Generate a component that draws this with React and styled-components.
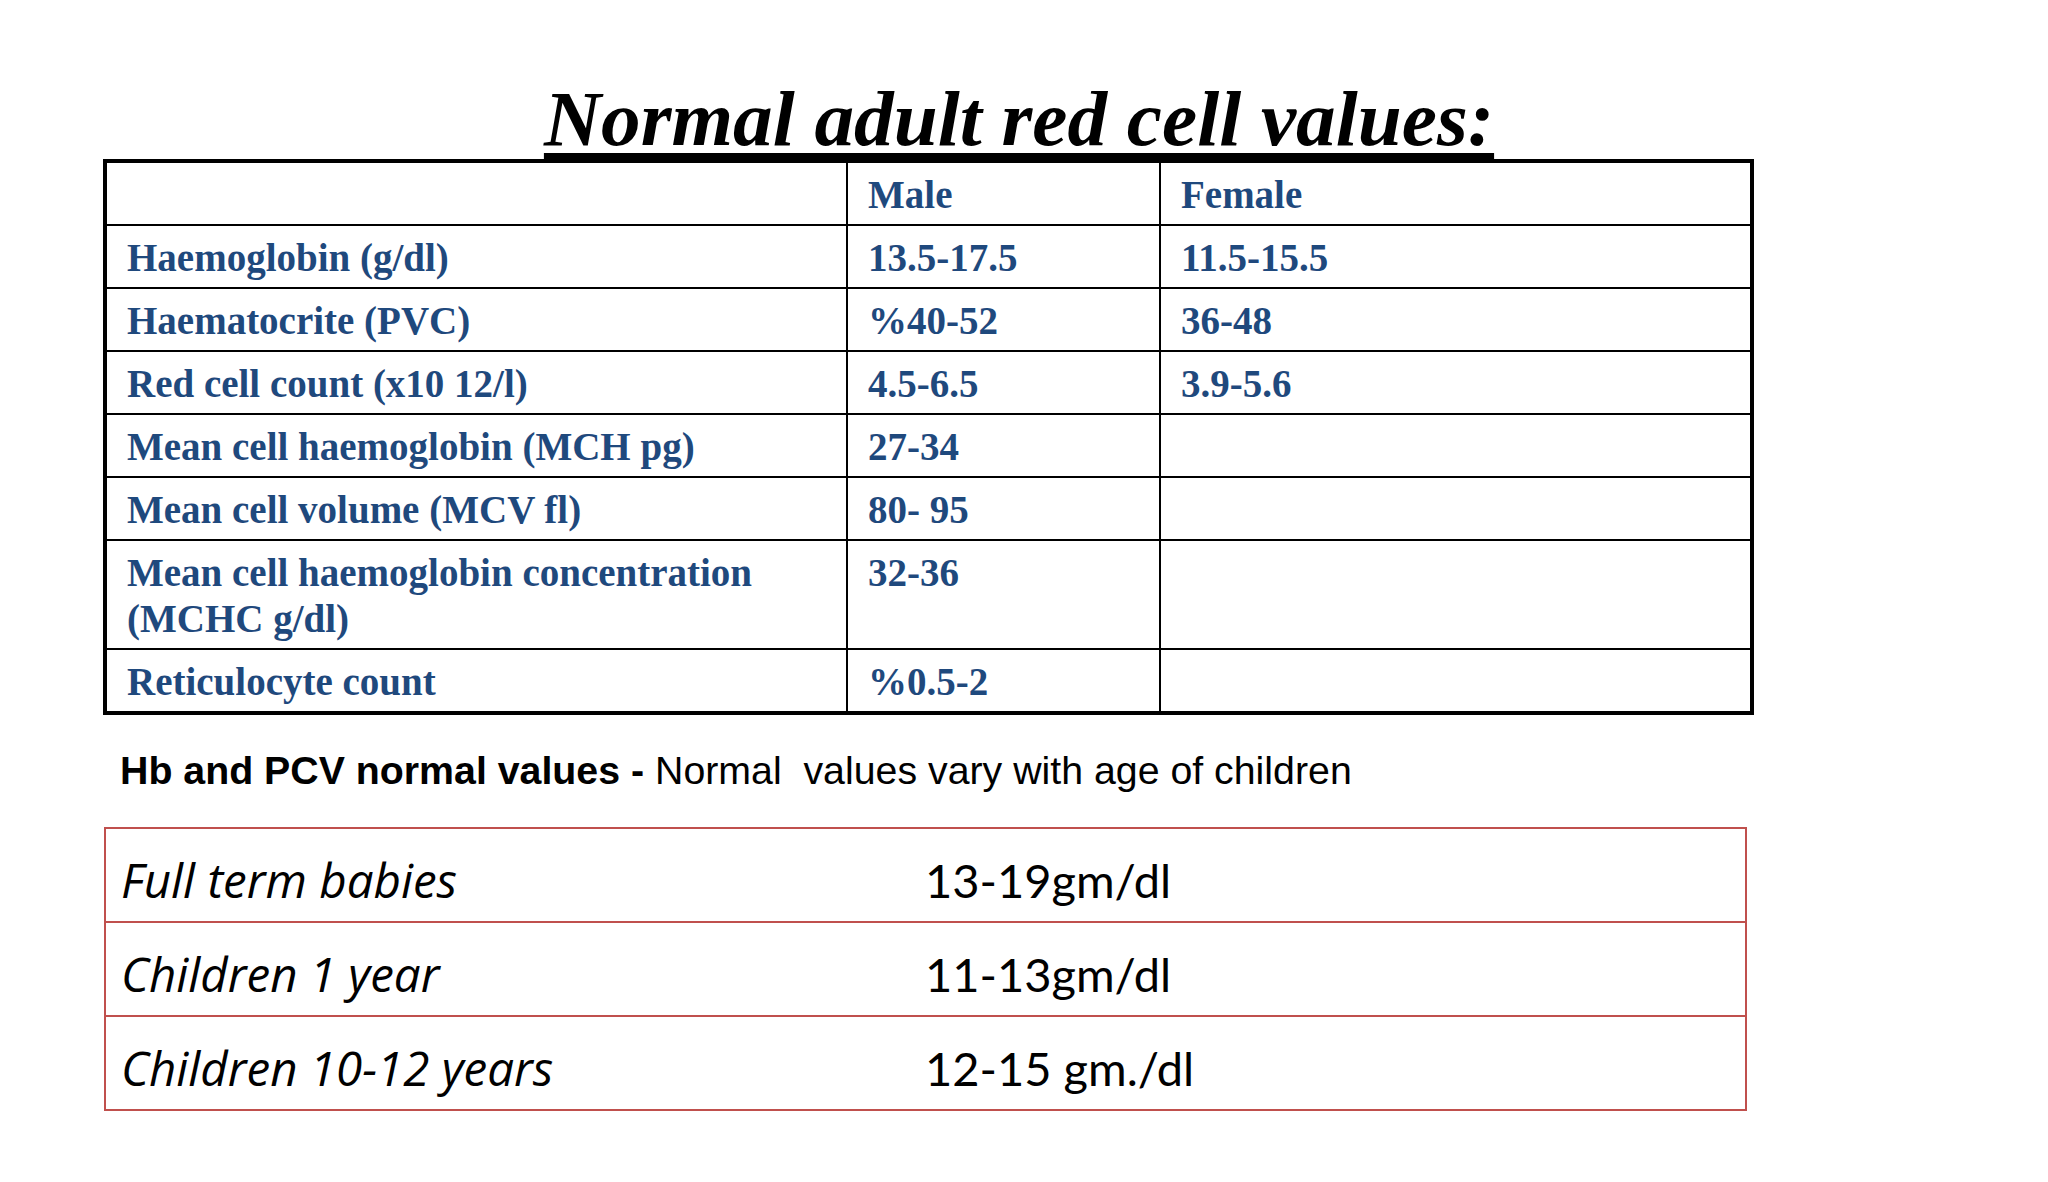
import React from "react";
import styled, { createGlobalStyle } from "styled-components";

const GlobalStyle = createGlobalStyle`
  html, body {
    margin: 0;
    padding: 0;
    background: #ffffff;
  }
`;

const Slide = styled.main`
  width: 2048px;
  height: 1182px;
  box-sizing: border-box;
  padding: 78px 0 0 103px;
  background: #ffffff;
  overflow: hidden;
`;

const Title = styled.h1`
  margin: 0 0 1px -103px;
  padding-right: 10px;
  font-family: "Liberation Serif", "Times New Roman", serif;
  font-style: italic;
  font-weight: 700;
  font-size: 79.2px;
  line-height: 80px;
  color: #000000;
  text-align: center;
  text-decoration: underline;
  text-decoration-thickness: 6px;
  text-underline-offset: 8px;
`;

const ValuesTable = styled.div`
  display: grid;
  grid-template-columns: 741px 313px 1fr;
  width: 1651px;
  box-sizing: border-box;
  border: 4px solid #000000;
  background: #ffffff;
`;

const Cell = styled.div`
  padding: 9px 12px 6px 20px;
  font-family: "Liberation Serif", "Times New Roman", serif;
  font-weight: 700;
  font-size: 39px;
  line-height: 46px;
  color: #1f497d;
  border-right: ${(p) => (p.$last ? "none" : "2px solid #000000")};
  border-bottom: ${(p) => (p.$bottom ? "none" : "2px solid #000000")};
`;

const Note = styled.p`
  margin: 33px 0 0 17px;
  font-family: "Liberation Sans", Arial, sans-serif;
  font-size: 39.3px;
  line-height: 44px;
  color: #000000;
  white-space: pre;
`;

const ChildTable = styled.div`
  display: grid;
  grid-template-columns: 804px 1fr;
  width: 1643px;
  margin: 35px 0 0 1px;
  box-sizing: border-box;
  border: 2px solid #c0504d;
  background: #ffffff;
`;

const ChildCell = styled.div`
  padding: 24px 15px 14px 15px;
  font-family: ${(p) => (p.$label ? '"Open Sans", Lato' : 'Lato, "Open Sans"')}, sans-serif;
  font-style: ${(p) => (p.$label ? "italic" : "normal")};
  font-size: ${(p) => (p.$label ? "47.5px" : "47px")};
  line-height: 54px;
  color: #000000;
  border-bottom: ${(p) => (p.$bottom ? "none" : "2px solid #c0504d")};
`;

const adultRows = [
  ["", "Male", "Female"],
  ["Haemoglobin (g/dl)", "13.5-17.5", "11.5-15.5"],
  ["Haematocrite (PVC)", "%40-52", "36-48"],
  ["Red cell count (x10 12/l)", "4.5-6.5", "3.9-5.6"],
  ["Mean cell haemoglobin (MCH pg)", "27-34", ""],
  ["Mean cell volume (MCV fl)", "80- 95", ""],
  ["Mean cell haemoglobin concentration (MCHC g/dl)", "32-36", ""],
  ["Reticulocyte count", "%0.5-2", ""],
];

const childRows = [
  ["Full term babies", "13-19gm/dl"],
  ["Children 1 year", "11-13gm/dl"],
  ["Children 10-12 years", "12-15 gm./dl"],
];

export default function App() {
  return (
    <>
      <GlobalStyle />
      <Slide>
        <Title>Normal adult red cell values:</Title>

        <ValuesTable>
          {adultRows.map((row, r) =>
            row.map((text, c) => (
              <Cell
                key={`${r}-${c}`}
                $last={c === row.length - 1}
                $bottom={r === adultRows.length - 1}
              >
                {text}
              </Cell>
            ))
          )}
        </ValuesTable>

        <Note>
          <b>Hb and PCV normal values - </b>Normal  values vary with age of children
        </Note>

        <ChildTable>
          {childRows.map((row, r) => (
            <React.Fragment key={r}>
              <ChildCell $label $bottom={r === childRows.length - 1}>
                {row[0]}
              </ChildCell>
              <ChildCell $bottom={r === childRows.length - 1}>{row[1]}</ChildCell>
            </React.Fragment>
          ))}
        </ChildTable>
      </Slide>
    </>
  );
}
